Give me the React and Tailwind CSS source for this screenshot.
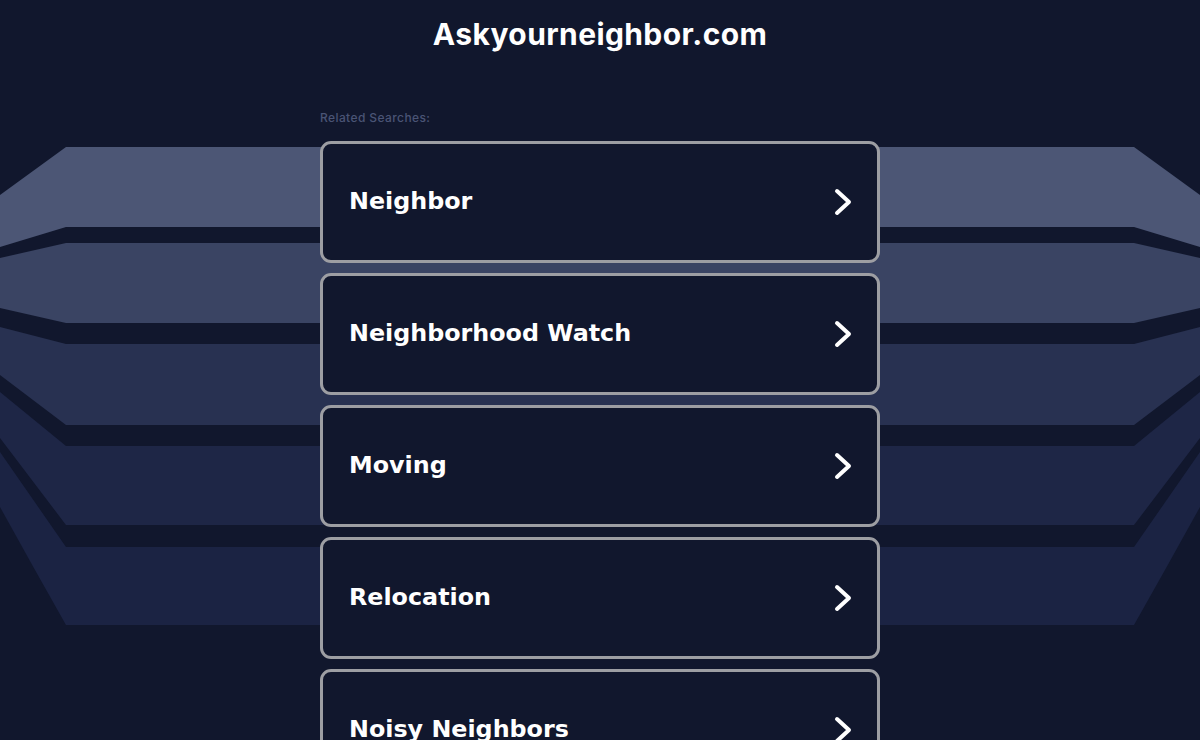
import React from 'react';

const searches = ['Neighbor', 'Neighborhood Watch', 'Moving', 'Relocation', 'Noisy Neighbors'];

const Bands = () => (
  <svg
    className="absolute left-0 top-0 h-[640px] w-full"
    viewBox="0 0 1200 640"
    preserveAspectRatio="none"
  >
    <polygon fill="#4c5675" points="0,195 66,147 1134,147 1200,195 1200,247 1134,227 66,227 0,247" />
    <polygon fill="#3a4463" points="0,258 66,243 1134,243 1200,258 1200,308 1134,323 66,323 0,308" />
    <polygon fill="#283151" points="0,327 66,344 1134,344 1200,327 1200,375 1134,425 66,425 0,375" />
    <polygon fill="#1e2646" points="0,392 66,446 1134,446 1200,392 1200,438 1134,525 66,525 0,438" />
    <path fill="#1b2343" d="M0,452 L66,547 L1134,547 L1200,452 L1200,507 Q1168,565 1134,625 L66,625 Q32,565 0,507 Z" />
  </svg>
);

const Chevron = () => (
  <svg width="24" height="30" viewBox="0 0 24 30" fill="none">
    <path d="M6 4 L18 15 L6 26" stroke="#ffffff" strokeWidth="4" strokeLinecap="round" strokeLinejoin="round" />
  </svg>
);

export default function App() {
  return (
    <div className="relative min-h-[740px] overflow-hidden bg-[#11172d]">
      <Bands />
      <div className="relative flex flex-col items-center">
        <h1
          className="mt-[14px] text-[30px] font-bold leading-[40px] tracking-[0.4px] text-white"
          style={{ fontFamily: 'Inter, "Noto Sans", sans-serif' }}
        >
          Askyourneighbor.com
        </h1>
        <div className="mt-[57px] w-[560px]">
          <p
            className="text-[12px] font-medium leading-[14px] tracking-[0.4px] text-[#4a5475]"
            style={{ fontFamily: 'Inter, "Noto Sans", sans-serif' }}
          >
            Related Searches:
          </p>
          <div className="mt-[16px] flex flex-col gap-[10px]">
            {searches.map((s, i) => (
              <a
                key={i}
                href="#"
                className="flex h-[122px] items-center justify-between rounded-[11px] border-[3px] border-[#9d9ea3] bg-[#11172d] pl-[26px] pr-[22px]"
              >
                <span
                  className="text-[23.8px] font-bold text-white"
                  style={{ fontFamily: '"DejaVu Sans", Verdana, sans-serif' }}
                >
                  {s}
                </span>
                <Chevron />
              </a>
            ))}
          </div>
        </div>
      </div>
    </div>
  );
}
